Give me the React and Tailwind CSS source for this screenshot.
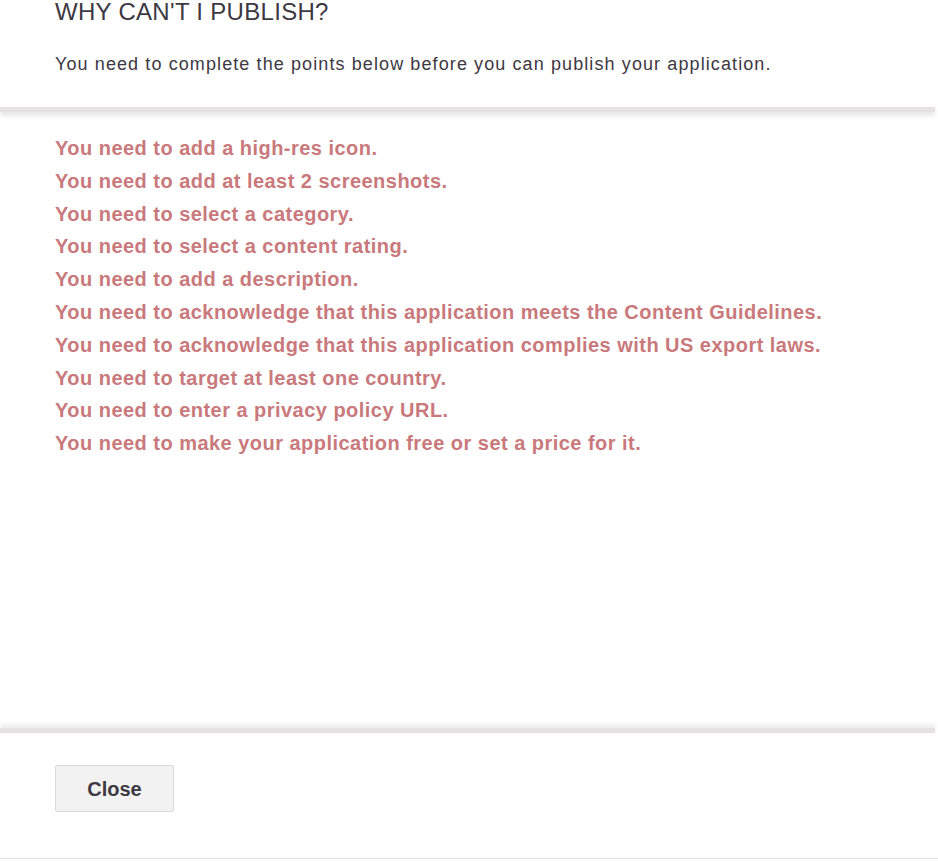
import React from "react";

const points = [
  "You need to add a high-res icon.",
  "You need to add at least 2 screenshots.",
  "You need to select a category.",
  "You need to select a content rating.",
  "You need to add a description.",
  "You need to acknowledge that this application meets the Content Guidelines.",
  "You need to acknowledge that this application complies with US export laws.",
  "You need to target at least one country.",
  "You need to enter a privacy policy URL.",
  "You need to make your application free or set a price for it.",
];

export default function App() {
  return (
    <div className="w-[938px] h-[861px] bg-white overflow-hidden flex flex-col font-['Liberation_Sans',Arial,sans-serif]">
      {/* header */}
      <div className="px-[55px] h-[107px] shrink-0">
        <h1 className="-mt-[2px] text-[24px] leading-[28px] tracking-[0.3px] text-[#3d3842] uppercase">Why can't I publish?</h1>
        <p className="mt-[28px] text-[18px] leading-[20px] tracking-[1.1px] text-[#3d3842]">
          You need to complete the points below before you can publish your application.
        </p>
      </div>

      <div className="h-[5px] shrink-0 bg-[#e4e2e2] shadow-[0_3px_5px_rgba(0,0,0,0.12)] mr-[3px]" />

      {/* list */}
      <div className="flex-1 px-[55px] pt-[20px]">
        <ul className="flex flex-col">
          {points.map((p) => (
            <li key={p} className="text-[20px] leading-[32.8px] tracking-[0.47px] font-bold text-[#c9797c]">
              {p}
            </li>
          ))}
        </ul>
      </div>

      <div className="h-[5px] shrink-0 bg-[#e4e2e2] shadow-[0_-3px_5px_rgba(0,0,0,0.1)] mr-[3px]" />

      {/* footer */}
      <div className="h-[126px] shrink-0 px-[55px] pt-[32px] border-b border-[#e8dede]">
        <button className="w-[119px] h-[47px] bg-[#f3f2f2] border border-[#dcd8d8] rounded-[2px] text-[20px] font-bold text-[#3d3842]">
          Close
        </button>
      </div>
      <div className="h-[2px] shrink-0" />
    </div>
  );
}
